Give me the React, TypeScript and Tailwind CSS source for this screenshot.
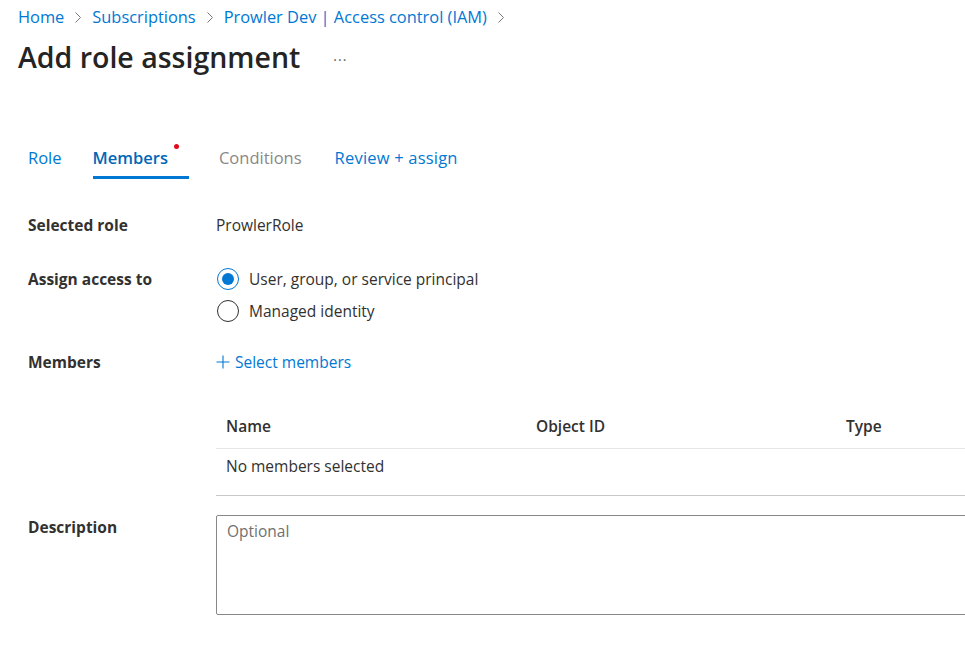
import React from "react";

const font = { fontFamily: '"Open Sans", "Noto Sans", sans-serif' };

function Chevron() {
  return (
    <svg width="6" height="11" viewBox="0 0 6 11" className="mx-[11px] mt-[1px]">
      <path d="M0.5 0.5 L5.5 5.5 L0.5 10.5" fill="none" stroke="#797775" strokeWidth="1" />
    </svg>
  );
}

export default function App() {
  return (
    <div className="w-[965px] h-[652px] overflow-hidden bg-white text-[#323130]" style={font}>
      <div className="flex items-center pl-[18px] h-[34px] text-[16.4px] text-[#0078d4]">
        <span>Home</span>
        <Chevron />
        <span>Subscriptions</span>
        <Chevron />
        <span>Prowler Dev | Access control (IAM)</span>
        <Chevron />
      </div>
      <div className="flex items-center pl-[18px] h-[46px]">
        <h1 className="text-[28.5px] font-semibold text-[#242424] leading-none">Add role assignment</h1>
        <span className="ml-[33px] mt-[4px] text-[14px] text-[#605e5c] tracking-[1px]">···</span>
      </div>

      <div className="flex pl-[28px] mt-[59px] h-[40px] text-[16.5px] leading-[24px]">
        <div className="pt-[7px] mr-[31px] text-[#0078d4]">Role</div>
        <div className="relative flex flex-col mr-[30px]">
          <div className="pt-[7px] pr-[21px] font-semibold text-[#0067b8]">Members</div>
          <span className="absolute left-[81px] top-[5px] w-[5px] h-[5px] rounded-full bg-[#e00b1c]" />
          <div className="mt-auto h-[3px] bg-[#0078d4]" />
        </div>
        <div className="pt-[7px] mr-[33px] text-[#8a8886]">Conditions</div>
        <div className="pt-[7px] text-[#0078d4] tracking-[0.2px]">Review + assign</div>
      </div>

      <div className="grid grid-cols-[188px_1fr] pl-[28px] mt-[34px] text-[15.5px] leading-[24px]">
        <div className="font-bold h-[24px]">Selected role</div>
        <div className="h-[24px]">ProwlerRole</div>

        <div className="font-bold mt-[30px] h-[24px]">Assign access to</div>
        <div className="mt-[30px] flex flex-col gap-[8px]">
          <div className="flex items-center h-[24px]">
            <span className="w-[22px] h-[22px] ml-[1px] rounded-full border border-[#0078d4] flex items-center justify-center">
              <span className="w-[12px] h-[12px] rounded-full bg-[#0078d4]" />
            </span>
            <span className="ml-[10px]">User, group, or service principal</span>
          </div>
          <div className="flex items-center h-[24px]">
            <span className="w-[22px] h-[22px] ml-[1px] rounded-full border border-[#323130]" />
            <span className="ml-[10px]">Managed identity</span>
          </div>
        </div>

        <div className="font-bold mt-[27px] h-[24px]">Members</div>
        <div className="mt-[27px] flex flex-col">
          <div className="flex items-center h-[24px] text-[#0078d4]">
            <svg width="14" height="14" viewBox="0 0 14 14" className="mr-[5px]">
              <path d="M7 0.5 V13.5 M0.5 7 H13.5" stroke="#0078d4" strokeWidth="1.1" fill="none" />
            </svg>
            <span>Select members</span>
          </div>
          <div className="w-[800px] mt-[30px]">
            <div className="grid grid-cols-[310px_310px_1fr] h-[45px] items-center border-b border-[#e6e6e6] font-semibold">
              <div className="pl-[10px]">Name</div>
              <div className="pl-[10px]">Object ID</div>
              <div className="pl-[10px]">Type</div>
            </div>
            <div className="h-[47px] pt-[5px] pl-[10px] border-b border-[#c8c8c8]">
              No members selected
            </div>
          </div>
        </div>

        <div className="font-bold mt-[19px] h-[24px]">Description</div>
        <div className="mt-[19px]">
          <div className="w-[800px] h-[100px] border border-[#8a8886] rounded-[2px] px-[10px] pt-[3px] text-[#707070]">
            Optional
          </div>
        </div>
      </div>
    </div>
  );
}
